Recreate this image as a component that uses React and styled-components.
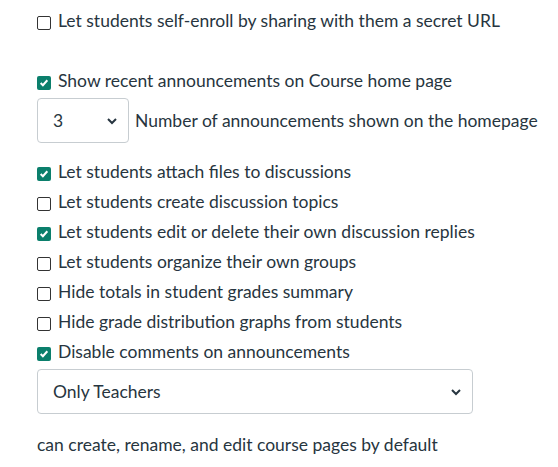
import React from 'react'
import styled, { createGlobalStyle } from 'styled-components'

const Global = createGlobalStyle`
  body { margin: 0; font-family: Lato, "Liberation Sans", sans-serif; color: #273540; background: #fff; }
`

const Page = styled.div`
  padding: 5px 0 0 37px;
  font-size: 17.5px;
`
const Row = styled.label`
  display: flex;
  align-items: center;
  height: 30px;
  gap: 7px;
  margin-bottom: ${p => p.gap || 0}px;
`
const Box = styled.span`
  width: 14px;
  height: 14px;
  margin-top: 6px;
  box-sizing: border-box;
  border-radius: 2px;
  flex: none;
  display: flex;
  align-items: center;
  justify-content: center;
  border: ${p => p.checked ? 'none' : '1px solid #333'};
  background: ${p => p.checked ? '#0b7f6c' : '#fff'};
`
const SelectBox = styled.div`
  display: flex;
  align-items: center;
  justify-content: space-between;
  box-sizing: border-box;
  width: ${p => p.w}px;
  height: 45px;
  border: 1px solid #c7cdd1;
  border-radius: 4px;
  padding: 0 10px 0 15px;
`
const SelectRow = styled.div`
  display: flex;
  align-items: center;
  gap: 6px;
  margin: ${p => p.m};
`
const Note = styled.div`
  margin-top: 20px;
`

const Chevron = () => (
  <svg width="12" height="12" viewBox="0 0 12 12"><path d="M2 4l4 4 4-4" fill="none" stroke="#273540" strokeWidth="2" /></svg>
)

const Check = ({ checked, children, gap }) => (
  <Row gap={gap}>
    <Box checked={checked}>
      {checked && <svg width="10" height="10" viewBox="0 0 9 9"><path d="M1.5 4.5l2 2 4-4.5" fill="none" stroke="#fff" strokeWidth="1.8" /></svg>}
    </Box>
    {children}
  </Row>
)

export default function App() {
  return (
    <Page>
      <Global />
      <Check gap={30}>Let students self-enroll by sharing with them a secret URL</Check>
      <Check checked>Show recent announcements on Course home page</Check>
      <SelectRow m="3px 0 13px">
        <SelectBox w={92}>3<Chevron /></SelectBox>
        Number of announcements shown on the homepage
      </SelectRow>
      <Check checked>Let students attach files to discussions</Check>
      <Check>Let students create discussion topics</Check>
      <Check checked>Let students edit or delete their own discussion replies</Check>
      <Check>Let students organize their own groups</Check>
      <Check>Hide totals in student grades summary</Check>
      <Check>Hide grade distribution graphs from students</Check>
      <Check checked>Disable comments on announcements</Check>
      <SelectRow m="3px 0 0">
        <SelectBox w={436}>Only Teachers<Chevron /></SelectBox>
      </SelectRow>
      <Note>can create, rename, and edit course pages by default</Note>
    </Page>
  )
}
